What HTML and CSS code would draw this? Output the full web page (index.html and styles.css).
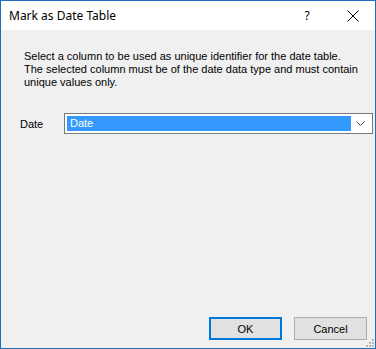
FILE: index.html
```html
<!DOCTYPE html>
<html>
<head>
<meta charset="utf-8">
<link rel="stylesheet" href="styles.css">
</head>
<body>
<div class="window">
  <div class="titlebar">
    <span class="title">Mark as Date Table</span>
    <span class="help">?</span>
    <span class="close">
      <svg width="12" height="12" viewBox="0 0 12 12"><path d="M0.5 0.5 L11.5 11.5 M11.5 0.5 L0.5 11.5" stroke="#000" stroke-width="1" fill="none"/></svg>
    </span>
  </div>
  <div class="content">
    <p class="desc">Select a column to be used as unique identifier for the date table.<br>The selected column must be of the date data type and must contain<br>unique values only.</p>
    <div class="row">
      <span class="label">Date</span>
      <div class="combo">
        <span class="selected">Date</span>
        <span class="arrow">
          <svg width="9" height="5" viewBox="0 0 9 5"><path d="M0.5 0.5 L4.5 4.5 L8.5 0.5" stroke="#444" stroke-width="1" fill="none"/></svg>
        </span>
      </div>
    </div>
    <div class="spacer"></div>
    <div class="buttons">
      <button class="btn default">OK</button>
      <button class="btn">Cancel</button>
    </div>
    <svg class="grip" width="8" height="8" viewBox="0 0 8 8">
      <rect x="6" y="0" width="2" height="2" fill="#b8b8b8"/>
      <rect x="3" y="3" width="2" height="2" fill="#b8b8b8"/>
      <rect x="6" y="3" width="2" height="2" fill="#b8b8b8"/>
      <rect x="0" y="6" width="2" height="2" fill="#b8b8b8"/>
      <rect x="3" y="6" width="2" height="2" fill="#b8b8b8"/>
      <rect x="6" y="6" width="2" height="2" fill="#b8b8b8"/>
    </svg>
  </div>
</div>
</body>
</html>
```
FILE: styles.css
```css
html, body {
  margin: 0;
  padding: 0;
  background: #ffffff;
}
.window {
  width: 376px;
  height: 349px;
  box-sizing: border-box;
  border: 1px solid #1c6fb8;
  display: flex;
  flex-direction: column;
  font-family: "Liberation Sans", Arial, sans-serif;
  font-size: 11px;
  color: #000;
}
.titlebar {
  height: 29px;
  background: #fff;
  display: flex;
  align-items: center;
  flex: none;
}
.title {
  font-family: "Noto Sans", "Liberation Sans", sans-serif;
  font-size: 12px;
  color: #000;
  padding-left: 8px;
  flex: 1;
}
.help {
  font-family: "Noto Sans", "Liberation Sans", sans-serif;
  font-size: 12px;
  width: 12px;
  margin-right: 34px;
  text-align: center;
}
.close {
  display: flex;
  margin-right: 16px;
}
.content {
  flex: 1;
  background: #f0f0f0;
  display: flex;
  flex-direction: column;
  padding: 20px 8px 8px 23px;
  position: relative;
}
.desc {
  margin: 0;
  line-height: 13px;
}
.row {
  display: flex;
  align-items: center;
  margin-top: 24px;
  margin-left: -4px;
}
.label {
  width: 44px;
}
.combo {
  flex: 1;
  height: 21px;
  box-sizing: border-box;
  border: 1px solid #7a7a7a;
  background: #fff;
  display: flex;
  align-items: center;
  padding: 2px;
  margin-right: -6px;
}
.selected {
  flex: 1;
  height: 15px;
  line-height: 15px;
  background: #3399ff;
  color: #fff;
  padding-left: 3px;
}
.arrow {
  width: 19px;
  display: flex;
  justify-content: center;
  align-items: center;
}
.spacer {
  flex: 1;
}
.buttons {
  display: flex;
  justify-content: flex-end;
  gap: 12px;
}
.btn {
  width: 73px;
  height: 23px;
  box-sizing: border-box;
  background: #e1e1e1;
  border: 1px solid #adadad;
  font-family: "Liberation Sans", Arial, sans-serif;
  font-size: 11px;
  color: #000;
  padding: 0;
  margin: 0;
}
.btn.default {
  border: 2px solid #0078d7;
}
.grip {
  position: absolute;
  right: 1px;
  bottom: 1px;
}
```
